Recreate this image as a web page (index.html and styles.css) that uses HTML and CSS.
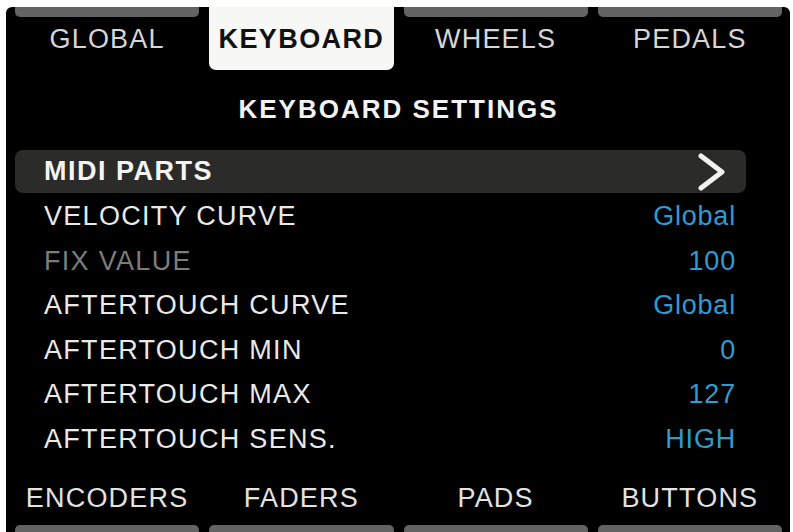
FILE: index.html
```html
<!DOCTYPE html>
<html>
<head>
<meta charset="utf-8">
<link rel="stylesheet" href="styles.css">
</head>
<body>
<div class="screen">
  <nav class="tabs top">
    <div class="tab"><div class="bar"></div><div class="label">GLOBAL</div></div>
    <div class="tab active"><div class="bar"></div><div class="label">KEYBOARD</div></div>
    <div class="tab"><div class="bar"></div><div class="label">WHEELS</div></div>
    <div class="tab"><div class="bar"></div><div class="label">PEDALS</div></div>
  </nav>
  <h1 class="title">KEYBOARD SETTINGS</h1>
  <ul class="list">
    <li class="row selected"><span class="name">MIDI PARTS</span>
      <svg class="chev" width="30" height="38" viewBox="0 0 30 38"><path d="M4 3 L25 19 L4 35" fill="none" stroke="#f2f2f2" stroke-width="5" stroke-linecap="round" stroke-linejoin="round"/></svg>
    </li>
    <li class="row"><span class="name">VELOCITY CURVE</span><span class="val">Global</span></li>
    <li class="row disabled"><span class="name">FIX VALUE</span><span class="val">100</span></li>
    <li class="row"><span class="name">AFTERTOUCH CURVE</span><span class="val">Global</span></li>
    <li class="row"><span class="name">AFTERTOUCH MIN</span><span class="val">0</span></li>
    <li class="row"><span class="name">AFTERTOUCH MAX</span><span class="val">127</span></li>
    <li class="row"><span class="name">AFTERTOUCH SENS.</span><span class="val">HIGH</span></li>
  </ul>
  <nav class="tabs bottom">
    <div class="tab"><div class="label">ENCODERS</div><div class="bar"></div></div>
    <div class="tab"><div class="label">FADERS</div><div class="bar"></div></div>
    <div class="tab"><div class="label">PADS</div><div class="bar"></div></div>
    <div class="tab"><div class="label">BUTTONS</div><div class="bar"></div></div>
  </nav>
</div>
</body>
</html>
```
FILE: styles.css
```css
html, body {
  margin: 0;
  padding: 0;
  background: #ffffff;
  height: 100%;
  overflow: hidden;
}
body {
  font-family: "Liberation Sans", Arial, sans-serif;
}
.screen {
  margin: 7px 0 0 6px;
  width: 784px;
  height: 525px;
  background: #000;
  border-radius: 6px 6px 0 0;
  display: flex;
  flex-direction: column;
  overflow: hidden;
  box-sizing: border-box;
  padding: 0 8px 0 9px;
}
.tabs {
  display: grid;
  grid-template-columns: repeat(4, 1fr);
  column-gap: 10px;
}
.tab {
  display: flex;
  flex-direction: column;
}
.top .tab {
  height: 63px;
}
.top .bar {
  height: 10px;
  background: #636363;
  border-radius: 0 0 5px 5px;
}
.top .label {
  height: 44px;
  line-height: 44px;
}
.label {
  text-align: center;
  font-size: 27px;
  letter-spacing: 1.2px;
  color: #d6d6d6;
}
.top .tab.active {
  background: #f7f7f5;
  border-radius: 0 0 7px 7px;
}
.top .tab.active .bar {
  background: transparent;
}
.top .tab.active .label {
  color: #111;
  font-weight: bold;
  letter-spacing: 1.4px;
}
.title {
  margin: 22px 0 0 0;
  height: 34px;
  line-height: 34px;
  text-align: center;
  font-size: 26px;
  font-weight: bold;
  letter-spacing: 2px;
  color: #f2f2f2;
}
.list {
  list-style: none;
  margin: 24px 0 0 0;
  padding: 0;
  width: 731px;
}
.row {
  height: 44.5px;
  display: flex;
  align-items: center;
  justify-content: space-between;
  padding: 0 10px 0 29px;
  font-size: 27px;
  letter-spacing: 1.3px;
  color: #e9e9e9;
}
.row.selected {
  height: 43px;
  margin-bottom: 1.5px;
  background: #2b2b29;
  border-radius: 8px;
  font-weight: bold;
  letter-spacing: 1.5px;
  color: #f4f4f4;
}
.chev {
  margin-right: 9px;
}
.row.disabled .name {
  color: #7c7c7c;
}
.val {
  color: #2f9bd0;
  letter-spacing: 0.8px;
}
.bottom {
  margin-top: auto;
}
.bottom .label {
  height: 46px;
  line-height: 46px;
  margin-bottom: 4px;
  color: #e2e2e2;
}
.bottom .bar {
  height: 7px;
  background: #636363;
  border-radius: 5px 5px 0 0;
}
```
